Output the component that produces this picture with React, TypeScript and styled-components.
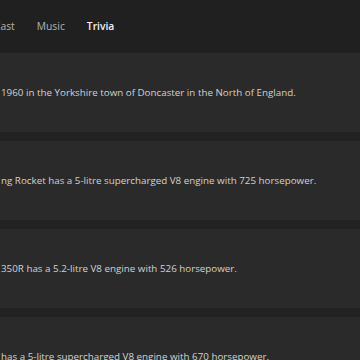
import { createGlobalStyle } from 'styled-components'
import styled from 'styled-components'

const facts = [
	'1960 in the Yorkshire town of Doncaster in the North of England.',
	'ng Rocket has a 5-litre supercharged V8 engine with 725 horsepower.',
	'350R has a 5.2-litre V8 engine with 526 horsepower.',
	'has a 5-litre supercharged V8 engine with 670 horsepower.',
]

const tabs = [
	{ label: 'Cast', active: false },
	{ label: 'Music', active: false },
	{ label: 'Trivia', active: true },
]

export default function App() {
	return (
		<>
			<GlobalStyle />
			<Page>
				<TabBar>
					{tabs.map(tab => (
						<Tab key={tab.label} $active={tab.active}>
							{tab.label}
						</Tab>
					))}
				</TabBar>
				<List>
					{facts.map(fact => (
						<Card key={fact}>
							<Fact>{fact}</Fact>
						</Card>
					))}
				</List>
			</Page>
		</>
	)
}

const GlobalStyle = createGlobalStyle`
	html, body {
		margin: 0;
		padding: 0;
		background: #222222;
		overflow: hidden;
	}
`

const Page = styled.div`
	width: 360px;
	height: 360px;
	overflow: hidden;
	background: #222222;
	font-family: 'Open Sans', 'Noto Sans', sans-serif;
`

const TabBar = styled.div`
	display: flex;
	align-items: center;
	gap: 22px;
	height: 53px;
	margin-left: -6px;
	padding-bottom: 2px;
	box-sizing: border-box;
	background: #202020;
`

const Tab = styled.div<{ $active: boolean }>`
	font-size: 10.3px;
	font-weight: ${({ $active }) => ($active ? 600 : 400)};
	color: ${({ $active }) => ($active ? '#f2f2f2' : '#b4b4b4')};
`

const List = styled.div`
	display: flex;
	flex-direction: column;
	gap: 9px;
`

const Card = styled.div`
	display: flex;
	align-items: center;
	height: 79px;
	background: #2a2a2a;
`

const Fact = styled.p`
	margin: 0;
	padding-left: 1px;
	white-space: nowrap;
	font-size: 9.8px;
	color: #d2d2d2;
`
